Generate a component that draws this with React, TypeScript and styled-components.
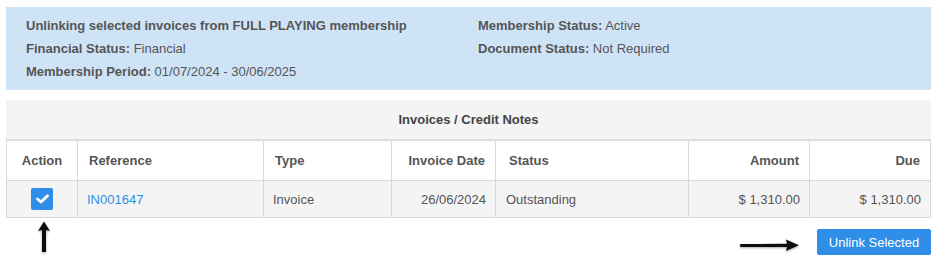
import React, { useState } from 'react';
import styled, { createGlobalStyle } from 'styled-components';

interface IInvoice {
  reference: string;
  type: string;
  date: string;
  status: string;
  amount: string;
  due: string;
}

const invoices: IInvoice[] = [
  {
    reference: 'IN001647',
    type: 'Invoice',
    date: '26/06/2024',
    status: 'Outstanding',
    amount: '$ 1,310.00',
    due: '$ 1,310.00',
  },
];

const GlobalStyle = createGlobalStyle`
  html, body {
    margin: 0;
    padding: 0;
    background: #fff;
  }
  body {
    font-family: 'Liberation Sans', Arial, sans-serif;
    font-size: 13px;
    color: #555;
  }
`;

const UpArrow = () => (
  <svg width="16" height="36" viewBox="0 0 16 36">
    <defs>
      <filter id="sh1" x="-50%" y="-20%" width="200%" height="140%">
        <feDropShadow dx="0" dy="1" stdDeviation="1" floodColor="#000" floodOpacity="0.35" />
      </filter>
    </defs>
    <g filter="url(#sh1)">
      <path d="M8 0.5 L14 10 L10 9 L10 31 L6 31 L6 9 L2 10 Z" fill="#111" />
    </g>
  </svg>
);

const RightArrow = () => (
  <svg width="64" height="18" viewBox="0 0 64 18">
    <defs>
      <filter id="sh2" x="-10%" y="-50%" width="120%" height="200%">
        <feDropShadow dx="0" dy="1" stdDeviation="1" floodColor="#000" floodOpacity="0.35" />
      </filter>
    </defs>
    <g filter="url(#sh2)">
      <path d="M1.5 8 L48 7.8 L47 3.5 L60 9.3 L47 15 L48 11 L1.5 11 Q0.5 9.5 1.5 8 Z" fill="#111" />
    </g>
  </svg>
);

const App: React.FC = () => {
  const [checked, setChecked] = useState<boolean>(true);

  return (
    <Page>
      <GlobalStyle />
      <InfoPanel>
        <InfoTitle>Unlinking selected invoices from FULL PLAYING membership</InfoTitle>
        <InfoLine>
          <b>Membership Status:</b> Active
        </InfoLine>
        <InfoLine>
          <b>Financial Status:</b> Financial
        </InfoLine>
        <InfoLine>
          <b>Document Status:</b> Not Required
        </InfoLine>
        <InfoLine>
          <b>Membership Period:</b> 01/07/2024 - 30/06/2025
        </InfoLine>
      </InfoPanel>

      <TablePanel>
        <PanelHeading>Invoices / Credit Notes</PanelHeading>
        <Table>
          <colgroup>
            <col style={{ width: 71 }} />
            <col style={{ width: 186 }} />
            <col style={{ width: 128 }} />
            <col style={{ width: 104 }} />
            <col style={{ width: 193 }} />
            <col style={{ width: 121 }} />
            <col />
          </colgroup>
          <thead>
            <tr>
              <Th align="center">Action</Th>
              <Th>Reference</Th>
              <Th>Type</Th>
              <Th align="right">Invoice Date</Th>
              <Th $pad={13}>Status</Th>
              <Th align="right">Amount</Th>
              <Th align="right">Due</Th>
            </tr>
          </thead>
          <tbody>
            {invoices.map((inv) => (
              <tr key={inv.reference}>
                <Td align="center">
                  <CheckBox $checked={checked} onClick={() => setChecked(!checked)}>
                    {checked && (
                      <svg width="13" height="10" viewBox="0 0 13 10">
                        <path d="M1.5 5 L5 8 L11.5 1.8" fill="none" stroke="#fff" strokeWidth="2.8" strokeLinecap="round" strokeLinejoin="round" />
                      </svg>
                    )}
                  </CheckBox>
                </Td>
                <Td>
                  <RefLink href="#">{inv.reference}</RefLink>
                </Td>
                <Td>{inv.type}</Td>
                <Td align="right">{inv.date}</Td>
                <Td $pad={10}>{inv.status}</Td>
                <Td align="right">{inv.amount}</Td>
                <Td align="right">{inv.due}</Td>
              </tr>
            ))}
          </tbody>
        </Table>
      </TablePanel>

      <Footer>
        <UpArrowWrap>
          <UpArrow />
        </UpArrowWrap>
        <Actions>
          <RightArrowWrap>
            <RightArrow />
          </RightArrowWrap>
          <UnlinkButton>Unlink Selected</UnlinkButton>
        </Actions>
      </Footer>
    </Page>
  );
};

// Styled Components
const Page = styled.div`
  width: 925px;
  padding: 7px 8px 0 6px;
`;

const InfoPanel = styled.div`
  background: #cfe3f7;
  height: 83px;
  box-sizing: border-box;
  padding: 7px 20px 0 20px;
  display: grid;
  grid-template-columns: 452px 1fr;
  grid-auto-rows: 23px;
  align-items: center;
`;

const InfoTitle = styled.div`
  font-weight: bold;
`;

const InfoLine = styled.div`
  b {
    font-weight: bold;
  }
`;

const TablePanel = styled.div`
  margin-top: 10px;
  background: #f4f4f4;
`;

const PanelHeading = styled.div`
  height: 39px;
  line-height: 39px;
  text-align: center;
  font-weight: bold;
  color: #444;
  border-bottom: 2px solid #ddd;
`;

const Table = styled.table`
  width: 100%;
  border-collapse: collapse;
  table-layout: fixed;
`;

const Th = styled.th<{ $pad?: number }>`
  height: 39px;
  background: #fff;
  border: 1px solid #d8d8d8;
  border-top: none;
  font-weight: bold;
  text-align: ${({ align }) => align || 'left'};
  padding: 0 ${({ align }) => (align === 'right' ? 10 : 11)}px 0 ${({ $pad }) => $pad ?? 11}px;
  color: #555;
`;

const Td = styled.td<{ $pad?: number }>`
  height: 36px;
  border: 1px solid #d8d8d8;
  text-align: ${({ align }) => align || 'left'};
  padding: 0 9px 0 ${({ $pad }) => $pad ?? 9}px;
  color: #555;
`;

const CheckBox = styled.span<{ $checked: boolean }>`
  display: inline-flex;
  align-items: center;
  justify-content: center;
  width: 22px;
  height: 22px;
  border-radius: 2px;
  background: ${({ $checked }) => ($checked ? '#2e8ee8' : '#fff')};
  vertical-align: middle;
  cursor: pointer;
`;

const RefLink = styled.a`
  color: #2e8ee8;
  text-decoration: none;
`;

const Footer = styled.div`
  display: flex;
  justify-content: space-between;
  align-items: flex-start;
  margin-top: 3px;
`;

const UpArrowWrap = styled.div`
  margin-left: 30px;
`;

const Actions = styled.div`
  display: flex;
  align-items: center;
  gap: 14px;
  margin-top: 8px;
`;

const RightArrowWrap = styled.div`
  margin-top: 6px;
  line-height: 0;
`;

const UnlinkButton = styled.button`
  background: #2e8ee8;
  color: #fff;
  border: none;
  border-radius: 2px;
  height: 26px;
  width: 114px;
  font-family: 'Liberation Sans', Arial, sans-serif;
  font-size: 13px;
  cursor: pointer;
`;

export default App;
